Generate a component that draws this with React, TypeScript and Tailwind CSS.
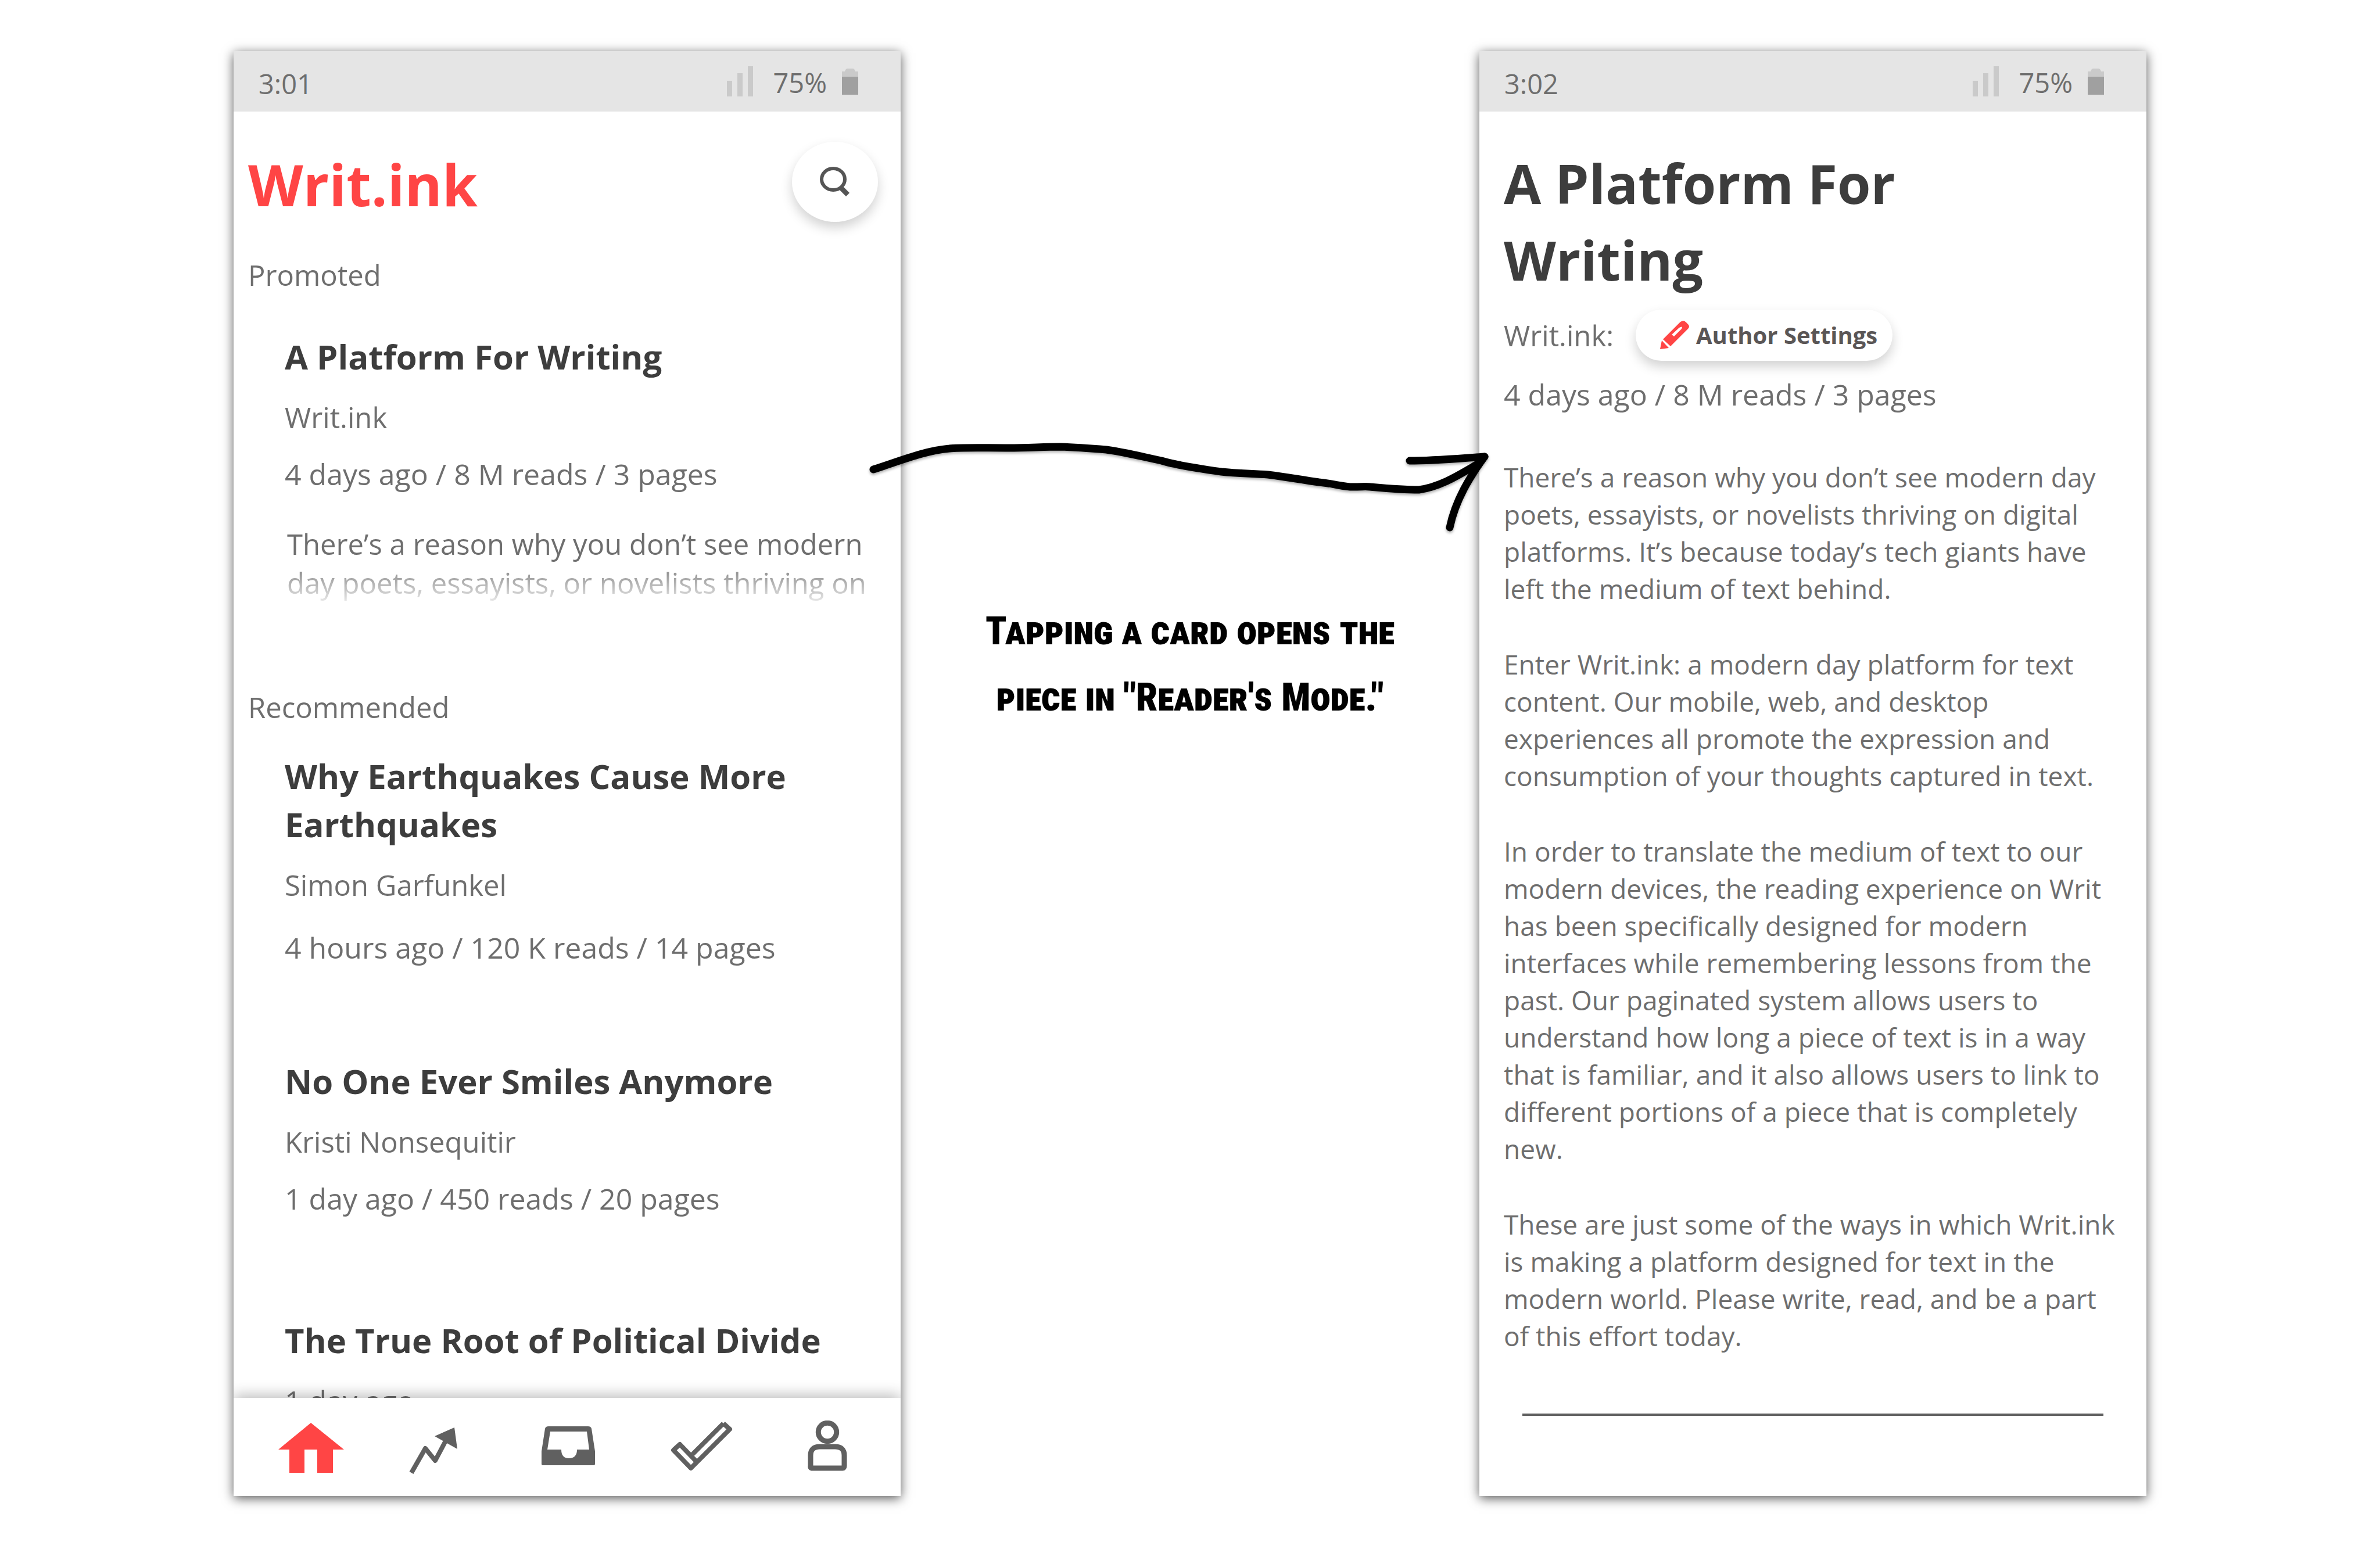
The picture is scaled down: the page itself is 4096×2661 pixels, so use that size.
import React from "react";

const ICON_GRAY = "#606060";

function StatusBar({ time }: { time: string }) {
  return (
    <div className="flex h-[104px] items-center bg-[#e5e5e5] pl-[43px] pr-[73px] text-[47px] leading-[66px]">
      <span className="pt-2">{time}</span>
      <div className="ml-auto flex items-center">
        <div className="mr-[34px] flex h-[52px] items-end gap-[9px]" role="img" aria-label="Signal strength">
          <span className="h-[27px] w-[9px] bg-[#cacaca]" />
          <span className="h-[40px] w-[9px] bg-[#cacaca]" />
          <span className="h-[52px] w-[9px] bg-[#cacaca]" />
        </div>
        <span className="pt-1">75%</span>
        <svg className="ml-[26px] h-[45px] w-[28px]" viewBox="0 0 28 45" aria-label="Battery" role="img">
          <path d="M0 5H5C6 1 8 0 10 0H18C20 0 22 1 23 5H28V14H0Z" fill="#cacaca" />
          <path d="M0 14H28V45H0Z" fill="#a0a0a0" />
        </svg>
      </div>
    </div>
  );
}

type CardProps = {
  title: string;
  author?: string;
  meta: string;
  metaGap?: string;
  excerpt?: string;
};

function Card({ title, author, meta, metaGap = "mt-8", excerpt }: CardProps) {
  return (
    <article className="pl-[88px] pr-[20px] text-[49px] leading-[66px]">
      <h3 className="pr-8 text-[58px] font-bold leading-[83px] text-[#3d3d3d]">
        <a href="#reader">{title}</a>
      </h3>
      {author && <p className="mt-[30px]">{author}</p>}
      <p className={`text-[50px] ${author ? metaGap : "mt-[30px]"}`}>{meta}</p>
      {excerpt && (
        <p className="relative mt-[54px] h-[138px] overflow-hidden pl-[4px] leading-[67px]">
          {excerpt}
          <span className="absolute inset-x-0 bottom-0 h-[70px] bg-linear-to-b from-white/10 to-white/90" />
        </p>
      )}
    </article>
  );
}

const tabs: { label: string; width: number; icon: React.ReactNode }[] = [
  {
    label: "Home",
    width: 113,
    icon: <path d="M56 4L113 50H94V90H67V50H45V90H19V50H0Z" fill="#ff4545" />,
  },
  {
    label: "Trending",
    width: 84,
    icon: (
      <>
        <path d="M4 90L28 48L45 69L63 35" fill="none" stroke={ICON_GRAY} strokeWidth="8" strokeLinejoin="round" />
        <path d="M78 12L83 49L44 27Z" fill={ICON_GRAY} />
      </>
    ),
  },
  {
    label: "Inbox",
    width: 92,
    icon: (
      <path
        fillRule="evenodd"
        fill={ICON_GRAY}
        d="M12 10H80Q85 10 86 14L92 53V75Q92 77 90 77H2Q0 77 0 75V53L6 14Q7 10 12 10ZM15 19L10 50H34Q34 65 47 65Q61 65 61 50H82L78 19Z"
      />
    ),
  },
  {
    label: "Done",
    width: 107,
    icon: (
      <path
        d="M91 5L102 15L35 82L5 51L16 41L43 69M91 5L38 58"
        fill="none"
        stroke={ICON_GRAY}
        strokeWidth="8"
        strokeLinejoin="round"
      />
    ),
  },
  {
    label: "Profile",
    width: 68,
    icon: (
      <g fill="none" stroke={ICON_GRAY} strokeWidth="9">
        <circle cx="34" cy="20" r="15.7" />
        <path d="M21 45H47Q63 45 63 60V78Q63 82 60 82H8Q4 82 5 78V60Q5 45 21 45Z" />
      </g>
    ),
  },
];

function TabBar() {
  return (
    <nav className="relative grid h-[169px] grid-cols-[213fr_208fr_256fr_202fr_232fr] items-center bg-white pl-[27px] pr-[10px] shadow-[0_-4px_24px_rgba(0,0,0,0.28)]">
      {tabs.map((t) => (
        <button key={t.label} type="button" aria-label={t.label} className="flex justify-center">
          <svg width={t.width} height="92" viewBox={`0 0 ${t.width} 92`}>
            {t.icon}
          </svg>
        </button>
      ))}
    </nav>
  );
}

const phone =
  "flex h-[2487px] min-w-0 flex-col overflow-hidden bg-white shadow-[0_4px_18px_rgba(0,0,0,0.65)]";

function HomeScreen() {
  return (
    <section className={phone}>
      <StatusBar time="3:01" />
      <div className="min-h-0 flex-1 overflow-hidden">
        <header className="flex items-end justify-between pl-[25px] pr-[39px] pt-[52px]">
          <h1 className="text-[98px] font-bold leading-[130px] text-[#ff4545]">Writ.ink</h1>
          <button
            type="button"
            aria-label="Search"
            className="flex h-[138px] w-[148px] items-center justify-center rounded-[50%] bg-white shadow-[0_10px_20px_rgba(0,0,0,0.18)]"
          >
            <svg className="h-[52px] w-[52px]" viewBox="0 0 52 52" fill="none" stroke="#555555">
              <ellipse cx="23" cy="21.5" rx="20" ry="18.5" strokeWidth="6" />
              <path d="M36 36L48 48" strokeWidth="8.5" />
            </svg>
          </button>
        </header>
        <h2 className="mt-[58px] pl-[25px] text-[49px] leading-[66px]">Promoted</h2>
        <div className="mt-[66px]">
          <Card
            title="A Platform For Writing"
            author="Writ.ink"
            meta="4 days ago / 8 M reads / 3 pages"
            excerpt="There’s a reason why you don’t see modern day poets, essayists, or novelists thriving on"
          />
        </div>
        <h2 className="mt-[143px] pl-[25px] text-[49px] leading-[66px]">Recommended</h2>
        <div className="mt-[44px]">
          <Card
            title="Why Earthquakes Cause More Earthquakes"
            author="Simon Garfunkel"
            meta="4 hours ago / 120 K reads / 14 pages"
            metaGap="mt-[42px]"
          />
        </div>
        <div className="mt-[155px]">
          <Card title="No One Ever Smiles Anymore" author="Kristi Nonsequitir" meta="1 day ago / 450 reads / 20 pages" />
        </div>
        <div className="mt-[169px]">
          <Card title="The True Root of Political Divide" meta="1 day ago" />
        </div>
      </div>
      <TabBar />
    </section>
  );
}

const paragraphs: string[][] = [
  [
    "There’s a reason why you don’t see modern day",
    "poets, essayists, or novelists thriving on digital",
    "platforms. It’s because today’s tech giants have",
    "left the medium of text behind.",
  ],
  [
    "Enter Writ.ink: a modern day platform for text",
    "content. Our mobile, web, and desktop",
    "experiences all promote the expression and",
    "consumption of your thoughts captured in text.",
  ],
  [
    "In order to translate the medium of text to our",
    "modern devices, the reading experience on Writ",
    "has been specifically designed for modern",
    "interfaces while remembering lessons from the",
    "past. Our paginated system allows users to",
    "understand how long a piece of text is in a way",
    "that is familiar, and it also allows users to link to",
    "different portions of a piece that is completely",
    "new.",
  ],
  [
    "These are just some of the ways in which Writ.ink",
    "is making a platform designed for text in the",
    "modern world. Please write, read, and be a part",
    "of this effort today.",
  ],
];

function ReaderScreen() {
  return (
    <section id="reader" className={phone}>
      <StatusBar time="3:02" />
      <div className="pl-[42px] text-[49px] leading-[66px]">
        <h1 className="mt-[57px] text-[93px] font-bold leading-[132px] text-[#3d3d3d]">
          A Platform For
          <br />
          Writing
        </h1>
        <div className="mt-[20px] flex items-center gap-[38px]">
          <span>Writ.ink:</span>
          <button
            type="button"
            className="flex h-[88px] items-center gap-[12px] rounded-[44px] bg-white pl-[42px] pr-[26px] text-[40px] font-bold text-[#5a5656] shadow-[0_10px_20px_rgba(0,0,0,0.18)]"
          >
            <svg className="h-[50px] w-[50px]" viewBox="0 0 50 50" fill="#ff4545">
              <path d="M0 49L3 34L15 47Z" />
              <path
                fillRule="evenodd"
                d="M5 32L35 2Q41 -2 45 3L48 6Q52 10 48 14L18 44ZM20 24L24 27L37 14Q40 8 33 12Z"
              />
            </svg>
            Author Settings
          </button>
        </div>
        <p className="mt-[25px] text-[50px]">4 days ago / 8 M reads / 3 pages</p>
        <div className="mt-[77px] flex flex-col gap-[66px] whitespace-nowrap text-[46px] leading-[64px]">
          {paragraphs.map((lines, i) => (
            <p key={i}>
              {lines.map((line) => (
                <React.Fragment key={line}>
                  {line}
                  <br />
                </React.Fragment>
              ))}
            </p>
          ))}
        </div>
      </div>
      <hr className="mx-[74px] mt-[102px] border-t-4 border-[#606060]" />
    </section>
  );
}

function Annotation() {
  return (
    <div className="relative">
      <svg
        className="absolute -left-[60px] top-[667px] z-10 w-[calc(100%+84px)] drop-shadow-[0_3px_2px_rgba(0,0,0,0.3)]"
        viewBox="1490 755 1080 170"
        fill="none"
        stroke="#000"
        strokeWidth="13"
        strokeLinecap="round"
        strokeLinejoin="round"
        aria-hidden="true"
      >
        <path d="M1503 808C1550 793 1590 776 1634 772C1650 770 1690 771 1736 771C1770 771 1795 769 1824 769C1855 770 1880 772 1904 774C1940 779 1965 786 1999 793C2015 798 2060 806 2102 812C2130 815 2155 815 2182 817C2215 821 2240 826 2270 830C2300 833 2310 838 2329 838C2345 838 2350 837 2358 838C2380 840 2410 843 2442 843C2480 838 2515 815 2541 800L2555 786" />
        <path d="M2426 793C2467 793 2510 789 2555 786C2530 820 2505 860 2495 908" />
      </svg>
      <p className="pt-[942px] text-center font-['Roboto_Condensed','Roboto',sans-serif] text-[66px] font-black leading-[114px] text-black [font-variant-caps:small-caps]">
        Tapping a card opens the
        <br />
        piece in "Reader's Mode."
      </p>
    </div>
  );
}

export default function App() {
  return (
    <main className="grid min-h-screen grid-cols-[minmax(0,1148fr)_minmax(0,996fr)_minmax(0,1148fr)] items-start bg-white px-[402px] pt-[88px] font-['Open_Sans','Noto_Sans',sans-serif] text-[#6e6e6e]">
      <HomeScreen />
      <Annotation />
      <ReaderScreen />
    </main>
  );
}
